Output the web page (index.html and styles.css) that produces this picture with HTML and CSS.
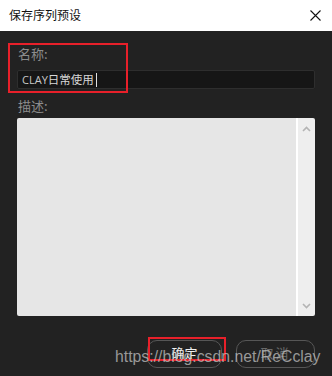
FILE: index.html
```html
<!DOCTYPE html>
<html lang="zh">
<head>
<meta charset="utf-8">
<link rel="stylesheet" href="styles.css">
</head>
<body>
<div class="dialog">
  <div class="titlebar">
    <span class="title">保存序列预设</span>
    <svg class="close" width="11" height="11" viewBox="0 0 11 11"><path d="M0.5 0.5 L10.5 10.5 M10.5 0.5 L0.5 10.5" stroke="#111" stroke-width="1.1" fill="none"/></svg>
  </div>
  <div class="body">
    <div class="label first">名称:</div>
    <div class="input"><span class="latin">CLAY</span>日常使用<span class="caret"></span></div>
    <div class="label">描述:</div>
    <div class="textarea">
      <div class="area"></div>
      <div class="scroll">
        <svg width="9" height="6" viewBox="0 0 9 6"><path d="M1 5 L4.5 1.5 L8 5" stroke="#b4b4b4" stroke-width="1.6" fill="none"/></svg>
        <svg width="9" height="6" viewBox="0 0 9 6"><path d="M1 1 L4.5 4.5 L8 1" stroke="#b4b4b4" stroke-width="1.6" fill="none"/></svg>
      </div>
    </div>
    <div class="buttons">
      <div class="btn ok">确定</div>
      <div class="btn cancel">取消</div>
    </div>
  </div>
  <div class="mark mark-name"></div>
  <div class="mark mark-ok"></div>
  <div class="watermark">https://blog.csdn.net/ReCclay</div>
</div>
</body>
</html>
```
FILE: styles.css
```css
html, body {
  margin: 0;
  padding: 0;
  background: #222222;
}
.dialog {
  position: relative;
  width: 332px;
  height: 376px;
  overflow: hidden;
  background: #222222;
  font-family: "Noto Sans CJK SC", "Noto Sans", sans-serif;
}
.titlebar {
  height: 31px;
  background: #ffffff;
  display: flex;
  align-items: center;
  justify-content: space-between;
  padding: 0 11px 0 9px;
}
.title {
  font-size: 12px;
  color: #111;
  line-height: 1;
  margin-top: -1px;
}
.close {
  display: block;
  margin-top: -1px;
}
.body {
  padding: 15px 17px 0 17px;
}
.label {
  font-size: 13px;
  line-height: 16px;
  color: #8c8c8c;
  height: 16px;
  padding-left: 1px;
}
.label.first {
  margin-bottom: 8px;
}
.input {
  height: 19px;
  box-sizing: border-box;
  background: #161616;
  border: 1px solid #2e2e2e;
  border-radius: 2px;
  font-size: 11.5px;
  color: #d6d6d6;
  line-height: 17px;
  padding-left: 4px;
  display: flex;
  align-items: center;
  margin-bottom: 9px;
}
.latin {
  font-family: "Open Sans", "Noto Sans", sans-serif;
  font-size: 11px;
  color: #c8c8c8;
}
.caret {
  display: inline-block;
  width: 1px;
  height: 14px;
  background: #e0e0e0;
  margin-left: 2px;
}
.textarea {
  margin-top: 4px;
  height: 198px;
  display: flex;
  border-radius: 2px;
  overflow: hidden;
  width: 298px;
}
.area {
  flex: 1;
  background: #e6e6e6;
  border-right: 2px solid #ffffff;
}
.scroll {
  width: 17px;
  background: #eeeeee;
  display: flex;
  flex-direction: column;
  justify-content: space-between;
  align-items: center;
  padding: 8px 0 7px;
}
.scroll svg {
  display: block;
}
.buttons {
  display: flex;
  justify-content: flex-end;
  gap: 14px;
  margin-top: 24px;
  width: 298px;
}
.btn {
  height: 28px;
  box-sizing: border-box;
  border: 1px solid #565656;
  border-radius: 10px;
  font-size: 13px;
  line-height: 22px;
  text-align: center;
  padding-top: 1px;
}
.btn.ok {
  width: 75px;
  color: #f0f0f0;
}
.btn.cancel {
  width: 79px;
  color: #6a6a6a;
  letter-spacing: 2px;
}
.mark {
  position: absolute;
  border: 2px solid #e8202a;
  box-sizing: border-box;
}
.mark-name {
  left: 8px;
  top: 43px;
  width: 120px;
  height: 50px;
}
.mark-ok {
  left: 148px;
  top: 337px;
  width: 78px;
  height: 24px;
}
.watermark {
  position: absolute;
  left: 115px;
  top: 347px;
  font-family: "Liberation Sans", Arial, sans-serif;
  font-size: 15.8px;
  line-height: 20px;
  color: rgba(200, 200, 200, 0.72);
  white-space: nowrap;
}
```
